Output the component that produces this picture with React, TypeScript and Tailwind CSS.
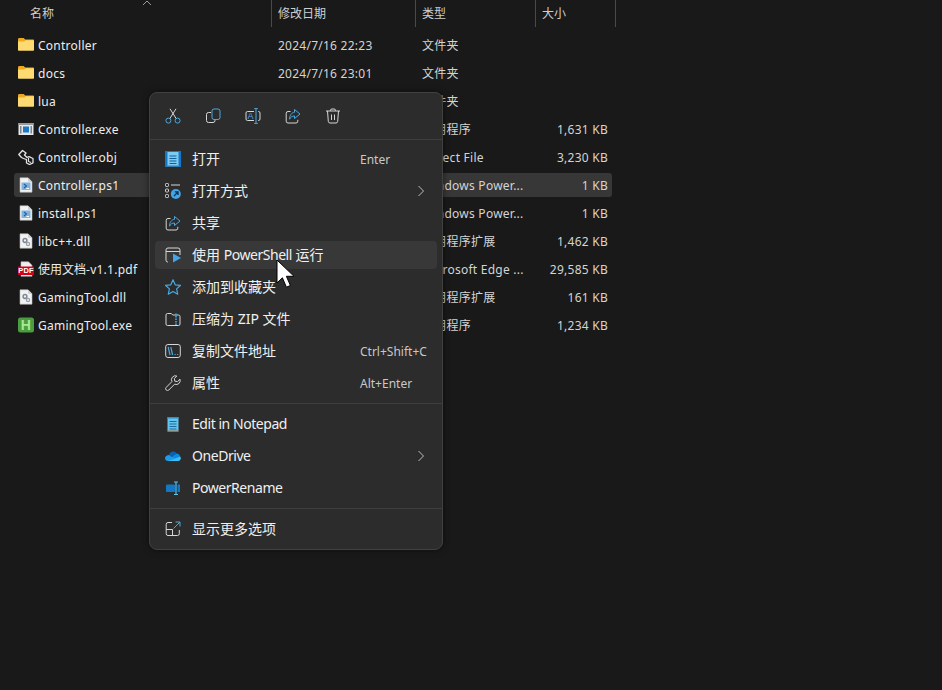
import type { ReactNode } from "react";

const GRAY = "#d6d6d6";
const BLUE = "#4aa8e0";

function Icon({ children, size = 16 }: { children: ReactNode; size?: number }) {
  return (
    <svg width={size} height={size} viewBox="0 0 16 16" fill="none" className="shrink-0">
      {children}
    </svg>
  );
}

function FolderIcon() {
  return (
    <Icon>
      <path d="M0 2.5C0 1.7.6 1 1.4 1h4.2l1.6 1.6H15c.6 0 1 .4 1 1V5H0z" fill="#eeaa1c" />
      <path d="M0 4.4h6.2l1.4-1.2H15c.6 0 1 .4 1 1v8.6c0 .6-.4 1-1 1H1c-.6 0-1-.4-1-1z" fill="#fddb72" />
    </Icon>
  );
}

function ExeIcon() {
  return (
    <Icon>
      <rect x="0.5" y="2" width="15" height="12" fill="#e8e8e8" />
      <rect x="0.5" y="2" width="15" height="2" fill="#9a9a9a" />
      <rect x="2" y="5" width="1.5" height="7.5" fill="#7b8794" />
      <rect x="12.5" y="5" width="1.5" height="7.5" fill="#7b8794" />
      <rect x="5" y="5.5" width="6" height="6" fill="#1c78c8" />
    </Icon>
  );
}

function ObjIcon() {
  return (
    <Icon>
      <path d="M.8 5.5 4.5 1.5 8 4 6.5 6l2.5 2.5 2-.8 4 1.8v4.3L11.5 15.5 8.5 14v-3.5L5.5 9.5 3.5 8.5z" stroke="#e4e4e4" strokeWidth="1.3" strokeLinejoin="round" />
      <path d="M10.5 9v3.5l2.5 1" stroke="#e4e4e4" strokeWidth="1.1" />
    </Icon>
  );
}

function PageIcon({ children }: { children: ReactNode }) {
  return (
    <Icon>
      <path d="M2 .8h8l4 4v10.4H2z" fill="#f2f2f2" stroke="#b5b5b5" strokeWidth="0.6" />
      <path d="M10 .8v4h4z" fill="#cfcfcf" />
      {children}
    </Icon>
  );
}

function Ps1Icon() {
  return (
    <PageIcon>
      <rect x="3.5" y="5.5" width="9" height="7.5" fill="#7fb2df" />
      <path d="m6 7 2.5 2L6 11" stroke="#1f5f9e" strokeWidth="1.1" />
      <path d="M8.5 11.5h2.5" stroke="#fff" strokeWidth="1" />
    </PageIcon>
  );
}

function DllIcon() {
  return (
    <PageIcon>
      <circle cx="7" cy="7.5" r="1.9" stroke="#7c8894" strokeWidth="1.5" />
      <circle cx="10" cy="11" r="1.6" stroke="#98a2ac" strokeWidth="1.3" />
    </PageIcon>
  );
}

function PdfIcon() {
  return (
    <Icon>
      <path d="M3 .8h7.5L14 4.3v10.9H3z" fill="#efefef" stroke="#b5b5b5" strokeWidth="0.6" />
      <rect x="0" y="5.5" width="16" height="8.5" fill="#d3001b" />
      <text x="8" y="12.4" textAnchor="middle" fontSize="7.5" fontWeight="700" fill="#fff" fontFamily="Liberation Sans, sans-serif">
        PDF
      </text>
    </Icon>
  );
}

function HIcon() {
  return (
    <Icon>
      <rect x="0" y="0.5" width="16" height="15" rx="2.5" fill="#4a9e3f" />
      <text x="8" y="13.2" textAnchor="middle" fontSize="14" fontWeight="700" fill="#a9e895" fontFamily="Liberation Sans, sans-serif">
        H
      </text>
    </Icon>
  );
}

const files = [
  { name: "Controller", icon: <FolderIcon />, date: "2024/7/16 22:23", type: "文件夹", size: "" },
  { name: "docs", icon: <FolderIcon />, date: "2024/7/16 23:01", type: "文件夹", size: "" },
  { name: "lua", icon: <FolderIcon />, date: "", type: "文件夹", size: "" },
  { name: "Controller.exe", icon: <ExeIcon />, date: "", type: "应用程序", size: "1,631 KB" },
  { name: "Controller.obj", icon: <ObjIcon />, date: "", type: "Object File", size: "3,230 KB" },
  { name: "Controller.ps1", icon: <Ps1Icon />, date: "", type: "Windows Power...", size: "1 KB", selected: true },
  { name: "install.ps1", icon: <Ps1Icon />, date: "", type: "Windows Power...", size: "1 KB" },
  { name: "libc++.dll", icon: <DllIcon />, date: "", type: "应用程序扩展", size: "1,462 KB" },
  { name: <><span className="tracking-normal">使用文档</span>-v1.1.pdf</>, icon: <PdfIcon />, date: "", type: "Microsoft Edge ...", size: "29,585 KB" },
  { name: "GamingTool.dll", icon: <DllIcon />, date: "", type: "应用程序扩展", size: "161 KB" },
  { name: "GamingTool.exe", icon: <HIcon />, date: "", type: "应用程序", size: "1,234 KB" },
];

function Header() {
  return (
    <div className="flex h-[27px] text-[12px] text-[#cfcfcf]">
      <div className="relative flex w-[272px] items-center border-r border-[#4a4a4a] pl-[30px] pt-[1px]">
        <span>名称</span>
        <svg width="10" height="6" viewBox="0 0 10 6" fill="none" className="absolute left-[142px] top-0">
          <path d="M1 5 5 1l4 4" stroke="#9a9a9a" />
        </svg>
      </div>
      <div className="flex w-[144px] items-center border-r border-[#4a4a4a] pl-[6px] pt-[1px]">修改日期</div>
      <div className="flex w-[120px] items-center border-r border-[#4a4a4a] pl-[6px] pt-[1px]">类型</div>
      <div className="flex w-[80px] items-center border-r border-[#4a4a4a] pl-[6px] pt-[1px]">大小</div>
    </div>
  );
}

function FileRow({ file }: { file: (typeof files)[number] }) {
  return (
    <div className={`mb-1 flex h-6 w-[598px] items-center rounded-[3px] pr-1 text-[12px] tracking-[0.25px] ${file.selected ? "bg-[#373737]" : ""}`}>
      <div className="flex w-[264px] items-center gap-1 pl-1 text-[#ededed]">
        {file.icon}
        <span className="pt-[2px]">{file.name}</span>
      </div>
      <div className="w-[144px] pt-[2px] text-[#d4d4d4]">{file.date}</div>
      <div className="w-[120px] pt-[2px] text-[#d4d4d4]">{file.type}</div>
      <div className="flex-1 pt-[2px] text-right text-[#d4d4d4]">{file.size}</div>
    </div>
  );
}

const CutIcon = (
  <Icon>
    <path d="M4.8 10.6 11 .8M11.2 10.6 5 .8" stroke={GRAY} />
    <circle cx="3.4" cy="12.6" r="2.5" stroke={BLUE} />
    <circle cx="12.6" cy="12.6" r="2.5" stroke={BLUE} />
  </Icon>
);

const CopyIcon = (
  <Icon>
    <path d="M6 4.5H3.5a2 2 0 0 0-2 2v6a2 2 0 0 0 2 2H8a2 2 0 0 0 2-2v-1" stroke={GRAY} />
    <rect x="7" y="1" width="8" height="10.5" rx="2" stroke={BLUE} />
  </Icon>
);

const RenameIcon = (
  <Icon>
    <path d="M9 3.5H2.5A1.5 1.5 0 0 0 1 5v6a1.5 1.5 0 0 0 1.5 1.5H9M13 3.5h.5A1.5 1.5 0 0 1 15 5v6a1.5 1.5 0 0 1-1.5 1.5H13" stroke={GRAY} />
    <path d="M11 .8v14.4M9.2.6h3.6M9.2 15.4h3.6" stroke={BLUE} />
    <text x="5.6" y="11.2" textAnchor="middle" fontSize="9" fill={BLUE} fontFamily="Liberation Sans, sans-serif">
      A
    </text>
  </Icon>
);

const ShareIcon = (
  <Icon>
    <path d="M5.5 3.5H3A1.8 1.8 0 0 0 1.2 5.3v7.9A1.8 1.8 0 0 0 3 15h8a1.8 1.8 0 0 0 1.8-1.8v-1.4" stroke={GRAY} />
    <path d="M9.5 1.5 15 6l-5.5 4.5V8C7.2 8 5.6 9 4.5 11.2 4.6 7.6 6.4 4.6 9.5 4.3z" stroke={BLUE} />
  </Icon>
);

const TrashIcon = (
  <Icon>
    <path d="M1 3h14M5.5 3V2.4A1.4 1.4 0 0 1 7 1h2a1.4 1.4 0 0 1 1.5 1.4V3M2.5 3l.8 10.4A1.8 1.8 0 0 0 5 15h6a1.8 1.8 0 0 0 1.7-1.6L13.5 3M6.5 6.5v5.5M9.5 6.5v5.5" stroke={GRAY} />
  </Icon>
);

const NotepadIcon = (
  <Icon>
    <rect width="16" height="16" fill="#1478c8" />
    <rect x="2.5" y="1" width="11" height="14" fill="#7ecbf2" />
    <path d="M4.5 5h7M4.5 7.5h7M4.5 10h7M4.5 12.5h7" stroke="#135f96" />
    <rect x="2.5" y="14.2" width="11" height="1" fill="#d9772b" />
  </Icon>
);

const OpenWithIcon = (
  <Icon>
    <rect x="0.5" y="0.5" width="3" height="3" rx="0.8" stroke={GRAY} />
    <rect x="0.5" y="6" width="3" height="3" rx="0.8" stroke={GRAY} />
    <rect x="0.5" y="11.5" width="3" height="3" rx="0.8" stroke={GRAY} />
    <path d="M6 2h9" stroke={GRAY} />
    <circle cx="10.8" cy="11" r="5" fill="#42a5ea" />
    <path d="M9 13l3.5-3.5M9.8 8.8h3.2v3.2" stroke="#10324d" strokeWidth="1.3" />
  </Icon>
);

const RunIcon = (
  <Icon>
    <path d="M3 15h-.2A1.8 1.8 0 0 1 1 13.2V3a2 2 0 0 1 2-2h10a2 2 0 0 1 2 2v5M1 4.5h14" stroke={GRAY} />
    <path d="M8 6.5 16 11l-8 4.5z" fill="#42a5ea" />
  </Icon>
);

const StarIcon = (
  <Icon>
    <path d="m8 .8 2.2 5 5.4.5-4 3.6 1.1 5.3L8 12.4l-4.7 2.8 1.1-5.3-4-3.6 5.4-.5z" stroke={BLUE} strokeWidth="1.2" strokeLinejoin="round" />
  </Icon>
);

const ZipIcon = (
  <Icon>
    <path d="M2.5 2.5h3.8l1.4 1.5h5.8A1.5 1.5 0 0 1 15 5.5v7.5a1.5 1.5 0 0 1-1.5 1.5h-11A1.5 1.5 0 0 1 1 13V4a1.5 1.5 0 0 1 1.5-1.5z" stroke={GRAY} />
    <path d="M11 2.5v12" stroke={BLUE} strokeWidth="1.6" strokeDasharray="1.5 1" />
  </Icon>
);

const CopyPathIcon = (
  <Icon>
    <rect x="0.7" y="1.5" width="14.6" height="13" rx="2.2" stroke={GRAY} />
    <path d="m3.2 4 1.8 8M5.8 4l1.8 8" stroke={BLUE} strokeWidth="1.2" />
    <path d="M9.5 11.5h1.2M12 11.5h1.2" stroke={BLUE} strokeWidth="1.2" />
  </Icon>
);

const WrenchIcon = (
  <Icon>
    <path d="M15 4.2a4 4 0 0 1-5.4 5L3.8 15a1.6 1.6 0 0 1-2.6-2.6l5.7-5.8A4 4 0 0 1 11.8 1L9.4 3.5l.4 2.7 2.7.4z" stroke={GRAY} strokeLinejoin="round" />
  </Icon>
);

const LightNotepadIcon = (
  <Icon>
    <rect x="2.5" y="1" width="11" height="14.5" rx="0.6" fill="#64c4ee" />
    <path d="M2.5 1h11v1.5h-11z" fill="#2c8fc8" />
    <path d="M4.5 5.5h7M4.5 8h7M4.5 10.5h7M4.5 13h7" stroke="#1c6c9c" />
    <rect x="2.5" y="14.6" width="11" height="1" fill="#c9692a" />
  </Icon>
);

const OneDriveIcon = (
  <Icon>
    <path d="M4 7a4.2 4.2 0 0 1 7.8-1.4l-5 3.2-2.6-1.3z" fill="#0a5fb8" />
    <path d="M6.4 9 11.6 5.6A3.6 3.6 0 0 1 15 9L9 11.8z" fill="#0f86e0" />
    <path d="M4.2 7C1.8 7 0 8.4 0 10.2c0 1.5 1.2 2.8 3 2.8h4l3-3-3.6-1.2z" fill="#1c9ce8" />
    <path d="M3 13h10.4a2.6 2.6 0 0 0 1.7-4.4L6.5 12z" fill="#36c0f5" />
  </Icon>
);

const PowerRenameIcon = (
  <Icon>
    <rect x="1" y="4.5" width="9" height="7.5" rx="1" fill="#1477c4" />
    <rect x="12.5" y="4.5" width="2.5" height="7.5" fill="#1477c4" />
    <path d="M11 2v12.5M9 2h4M9 14.5h4" stroke="#58c0ef" strokeWidth="1.2" />
  </Icon>
);

const MoreIcon = (
  <Icon>
    <path d="M7 1.5H3A1.8 1.8 0 0 0 1.2 3.3v9.4A1.8 1.8 0 0 0 3 14.5h9.5a1.8 1.8 0 0 0 1.8-1.8V9M1.2 8.5H7.5v6" stroke={GRAY} />
    <path d="M8.5 7.5 15 1M10.5 1H15v4.5" stroke={BLUE} />
  </Icon>
);

function Chevron() {
  return (
    <svg width="8" height="12" viewBox="0 0 8 12" fill="none" className="ml-auto mr-[12px]">
      <path d="m1.5 1 5 5-5 5" stroke="#bdbdbd" />
    </svg>
  );
}

function Latin({ children }: { children: ReactNode }) {
  return <span className="tracking-[-0.45px]">{children}</span>;
}

function MenuItem({
  icon,
  label,
  shortcut,
  submenu,
  hover,
}: {
  icon: ReactNode;
  label: ReactNode;
  shortcut?: string;
  submenu?: boolean;
  hover?: boolean;
}) {
  return (
    <div className={`mb-1 flex h-7 items-center rounded-[4px] pl-[10px] text-[14px] text-[#f0f0f0] ${hover ? "bg-[#383838]" : ""}`}>
      {icon}
      <span className="ml-[11px] pb-[2px]">{label}</span>
      {shortcut && (
        <span className="ml-auto w-[77px] pt-[2px] text-[12px] text-[#c8c8c8]">{shortcut}</span>
      )}
      {submenu && <Chevron />}
    </div>
  );
}

function ContextMenu() {
  return (
    <div className="absolute left-[149px] top-[92px] w-[294px] rounded-[8px] border border-[#414141] bg-[#2c2c2c] shadow-[0_0_6px_rgba(0,0,0,0.5)]">
      <div className="flex h-[47px] items-center border-b border-[#3e3e3e] pl-[3px]">
        {[CutIcon, CopyIcon, RenameIcon, ShareIcon, TrashIcon].map((icon, i) => (
          <div key={i} className="flex w-10 justify-center">
            {icon}
          </div>
        ))}
      </div>
      <div className="px-[5px] pb-[2px] pt-[5px]">
        <MenuItem icon={NotepadIcon} label="打开" shortcut="Enter" />
        <MenuItem icon={OpenWithIcon} label="打开方式" submenu />
        <MenuItem icon={ShareIcon} label="共享" />
        <MenuItem icon={RunIcon} label={<>使用 <Latin>PowerShell</Latin> 运行</>} hover />
        <MenuItem icon={StarIcon} label="添加到收藏夹" />
        <MenuItem icon={ZipIcon} label="压缩为 ZIP 文件" />
        <MenuItem icon={CopyPathIcon} label="复制文件地址" shortcut="Ctrl+Shift+C" />
        <MenuItem icon={WrenchIcon} label="属性" shortcut="Alt+Enter" />
      </div>
      <div className="border-t border-[#3e3e3e] px-[5px] pb-[2px] pt-[6px]">
        <MenuItem icon={LightNotepadIcon} label={<Latin>Edit in Notepad</Latin>} />
        <MenuItem icon={OneDriveIcon} label={<Latin>OneDrive</Latin>} submenu />
        <MenuItem icon={PowerRenameIcon} label={<Latin>PowerRename</Latin>} />
      </div>
      <div className="border-t border-[#3e3e3e] px-[5px] pb-[2px] pt-[6px]">
        <MenuItem icon={MoreIcon} label="显示更多选项" />
      </div>
    </div>
  );
}

function Cursor() {
  return (
    <svg width="20" height="30" viewBox="0 0 20 30" className="absolute left-[276px] top-[259px]">
      <path d="M1 1v23l5.4-5.2 4 9.4 4-1.7-4-9.2H18z" fill="#fff" stroke="#000" strokeWidth="1" />
    </svg>
  );
}

export default function App() {
  return (
    <div className="relative h-[690px] w-[942px] overflow-hidden bg-[#191919] font-['Noto_Sans','Noto_Sans_CJK_SC',sans-serif]">
      <Header />
      <div className="pl-[14px] pt-[6px]">
        {files.map((file, i) => (
          <FileRow key={i} file={file} />
        ))}
      </div>
      <ContextMenu />
      <Cursor />
    </div>
  );
}
